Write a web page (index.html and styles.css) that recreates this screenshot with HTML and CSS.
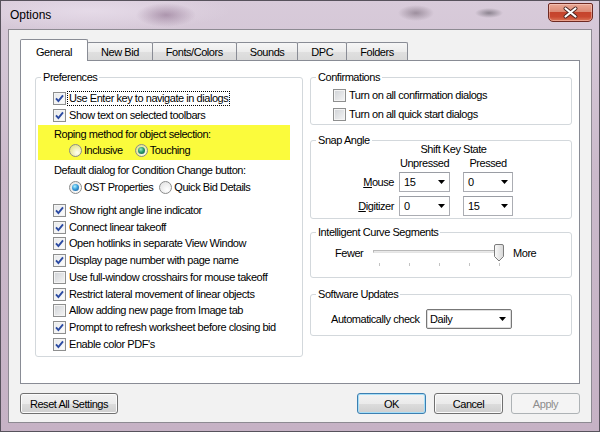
FILE: index.html
```html
<!DOCTYPE html>
<html>
<head>
    <title>Options</title>
    <meta charset="UTF-8">
    <link rel="stylesheet" href="styles.css">
</head>
<body>
<div class="window">
    <div class="titlebar">
        <span class="title">Options</span>
        <button class="close" title="Close">
            <svg width="43" height="17" viewBox="0 0 43 17">
                <path d="M16.5 4.5l10 8M26.5 4.5l-10 8" stroke="#4a2420" stroke-width="4" stroke-linecap="round"/>
                <path d="M16.5 4.5l10 8M26.5 4.5l-10 8" stroke="#fff" stroke-width="2.2" stroke-linecap="round"/>
            </svg>
        </button>
    </div>

    <div class="client">
        <div class="tabs">
            <div class="tab active">General</div>
            <div class="tab">New Bid</div>
            <div class="tab">Fonts/Colors</div>
            <div class="tab">Sounds</div>
            <div class="tab">DPC</div>
            <div class="tab">Folders</div>
        </div>

        <div class="panel">
            <fieldset class="group prefs">
                <legend>Preferences</legend>
                <div class="group-body">
                    <div class="check"><span class="box on"><svg viewBox="0 0 11 11"><path d="M2 5.4l2.4 2.7L9 2.3"/></svg></span><span class="text focus">Use Enter key to navigate in dialogs</span></div>
                    <div class="check"><span class="box on"><svg viewBox="0 0 11 11"><path d="M2 5.4l2.4 2.7L9 2.3"/></svg></span><span class="text">Show text on selected toolbars</span></div>

                    <div class="choice highlight">
                        <div class="choice-label">Roping method for object selection:</div>
                        <div class="radio-row">
                            <span class="option first"><span class="radio"></span>Inclusive</span>
                            <span class="option"><span class="radio on green"></span>Touching</span>
                        </div>
                    </div>

                    <div class="choice">
                        <div class="choice-label">Default dialog for Condition Change button:</div>
                        <div class="radio-row tall">
                            <span class="option first tight"><span class="radio on"></span>OST Properties</span>
                            <span class="option"><span class="radio"></span>Quick Bid Details</span>
                        </div>
                    </div>

                    <div class="check-list">
                        <div class="check"><span class="box on"><svg viewBox="0 0 11 11"><path d="M2 5.4l2.4 2.7L9 2.3"/></svg></span><span class="text">Show right angle line indicator</span></div>
                        <div class="check"><span class="box on"><svg viewBox="0 0 11 11"><path d="M2 5.4l2.4 2.7L9 2.3"/></svg></span><span class="text">Connect linear takeoff</span></div>
                        <div class="check"><span class="box on"><svg viewBox="0 0 11 11"><path d="M2 5.4l2.4 2.7L9 2.3"/></svg></span><span class="text">Open hotlinks in separate View Window</span></div>
                        <div class="check"><span class="box on"><svg viewBox="0 0 11 11"><path d="M2 5.4l2.4 2.7L9 2.3"/></svg></span><span class="text">Display page number with page name</span></div>
                        <div class="check"><span class="box"></span><span class="text">Use full-window crosshairs for mouse takeoff</span></div>
                        <div class="check"><span class="box on"><svg viewBox="0 0 11 11"><path d="M2 5.4l2.4 2.7L9 2.3"/></svg></span><span class="text">Restrict lateral movement of linear objects</span></div>
                        <div class="check"><span class="box"></span><span class="text">Allow adding new page from Image tab</span></div>
                        <div class="check"><span class="box on"><svg viewBox="0 0 11 11"><path d="M2 5.4l2.4 2.7L9 2.3"/></svg></span><span class="text">Prompt to refresh worksheet before closing bid</span></div>
                        <div class="check"><span class="box on"><svg viewBox="0 0 11 11"><path d="M2 5.4l2.4 2.7L9 2.3"/></svg></span><span class="text">Enable color PDF's</span></div>
                    </div>
                </div>
            </fieldset>

            <div class="stack">
                <fieldset class="group confirm">
                    <legend>Confirmations</legend>
                    <div class="group-body">
                        <div class="check wide"><span class="box"></span><span class="text">Turn on all confirmation dialogs</span></div>
                        <div class="check wide"><span class="box"></span><span class="text">Turn on all quick start dialogs</span></div>
                    </div>
                </fieldset>

                <fieldset class="group snap">
                    <legend>Snap Angle</legend>
                    <div class="snap-grid">
                        <div class="snap-head">Shift Key State</div>
                        <div class="snap-col unpressed">Unpressed</div>
                        <div class="snap-col pressed">Pressed</div>
                        <div class="snap-label row-mouse"><u>M</u>ouse</div>
                        <div class="combo row-mouse col-a">15<svg width="7" height="4" viewBox="0 0 7 4"><path d="M0 0h7L3.5 4z"/></svg></div>
                        <div class="combo row-mouse col-b">0<svg width="7" height="4" viewBox="0 0 7 4"><path d="M0 0h7L3.5 4z"/></svg></div>
                        <div class="snap-label row-digi"><u>D</u>igitizer</div>
                        <div class="combo row-digi col-a">0<svg width="7" height="4" viewBox="0 0 7 4"><path d="M0 0h7L3.5 4z"/></svg></div>
                        <div class="combo row-digi col-b">15<svg width="7" height="4" viewBox="0 0 7 4"><path d="M0 0h7L3.5 4z"/></svg></div>
                    </div>
                </fieldset>

                <fieldset class="group curve">
                    <legend>Intelligent Curve Segments</legend>
                    <div class="slider-row">
                        <span class="fewer">Fewer</span>
                        <div class="slider">
                            <div class="track"></div>
                            <div class="ticks"><i></i><i></i><i></i><i></i><i></i></div>
                            <svg class="thumb" width="11" height="18" viewBox="0 0 11 18">
                                <defs>
                                    <linearGradient id="thumbFill" x1="0" x2="1">
                                        <stop offset="0" stop-color="#fbfbfb"/>
                                        <stop offset="1" stop-color="#d6d6d6"/>
                                    </linearGradient>
                                </defs>
                                <path d="M0.5 2a1.5 1.5 0 0 1 1.5-1.5h6a1.5 1.5 0 0 1 1.5 1.5v10.5l-4.5 4.5l-4.5-4.5z" fill="url(#thumbFill)" stroke="#7c7c7c"/>
                            </svg>
                        </div>
                        <span class="more">More</span>
                    </div>
                </fieldset>

                <fieldset class="group updates">
                    <legend>Software Updates</legend>
                    <div class="update-row">
                        <span class="update-label">Automatically check</span>
                        <div class="combo list">Daily<svg width="7" height="4" viewBox="0 0 7 4"><path d="M0 0h7L3.5 4z"/></svg></div>
                    </div>
                </fieldset>
            </div>
        </div>

        <div class="actions">
            <button class="btn reset">Reset All Settings</button>
            <button class="btn default">OK</button>
            <button class="btn">Cancel</button>
            <button class="btn" disabled>Apply</button>
        </div>
    </div>
</div>
</body>
</html>
```

FILE: styles.css
```css
body {
    margin: 0;
    font-family: "Liberation Sans", Arial, sans-serif;
    font-size: 11px;
    letter-spacing: -0.45px;
    color: #000;
}

/* window frame */
.window {
    width: 600px;
    height: 432px;
    box-sizing: border-box;
    border: 1px solid #57525c;
    background:
        radial-gradient(ellipse 30px 12px at 165px 14px, rgba(140, 110, 140, 0.6), transparent),
        radial-gradient(ellipse 18px 8px at 415px 12px, rgba(110, 95, 110, 0.55), transparent),
        radial-gradient(ellipse 14px 5px at 488px 12px, rgba(90, 85, 95, 0.6), transparent),
        radial-gradient(ellipse 140px 20px at 90px 10px, rgba(235, 225, 238, 0.7), transparent),
        linear-gradient(#d8cbda, #cbbacb 40%, #c6b2c5);
    display: flex;
    flex-direction: column;
}
.titlebar {
    height: 28px;
    display: flex;
    align-items: flex-start;
    justify-content: space-between;
    padding-left: 9px;
}
.title {
    font-size: 12px;
    letter-spacing: 0;
    line-height: 28px;
}
.close {
    width: 45px;
    height: 19px;
    margin: 2px 6px 0 0;
    padding: 0;
    border: 1px solid #6e2a22;
    border-radius: 2px 2px 5px 5px;
    background: linear-gradient(#eaa896 0%, #dc8a74 45%, #c5442c 50%, #c9482f 75%, #dc7658 100%);
    box-shadow: inset 0 0 0 1px rgba(255, 220, 210, 0.45);
}
.close svg {
    display: block;
}

.client {
    height: 394px;
    box-sizing: border-box;
    margin: 0 7px 8px;
    border: 1px solid #8d8a92;
    background: #f2f2f2;
    padding: 9px 11px 0;
}

/* tabs */
.tabs {
    display: flex;
    align-items: flex-end;
    height: 21px;
}
.tab {
    position: relative;
    height: 18px;
    box-sizing: border-box;
    padding: 1px 13px 0;
    line-height: 16px;
    margin-right: -1px;
    border: 1px solid #898c95;
    border-bottom: none;
    border-radius: 2px 2px 0 0;
    background: linear-gradient(#f6f6f6, #ececec 50%, #e0e0e0 51%, #d9d9d9);
}
.tab.active {
    height: 22px;
    padding: 4px 15px 0;
    margin-bottom: -1px;
    background: #fff;
    z-index: 1;
}

.panel {
    height: 324px;
    box-sizing: border-box;
    border: 1px solid #898c95;
    background: #fff;
    display: grid;
    grid-template-columns: 268px 262px;
    column-gap: 7px;
    align-items: start;
    padding: 10px 0 0 14px;
}

/* group boxes */
.group {
    margin: 0;
    padding: 0;
    min-width: 0;
    box-sizing: border-box;
    border: 1px solid #d3d8dc;
    border-radius: 3px;
}
.group legend {
    margin-left: 5px;
    padding: 0 2px;
    line-height: 13px;
}
.prefs {
    height: 286px;
}
.prefs .group-body {
    padding: 6px 0 0 17px;
}
.stack {
    display: flex;
    flex-direction: column;
}
.confirm {
    height: 54px;
}
.confirm .group-body {
    padding: 2px 0 0 22px;
}
.snap {
    height: 85px;
    margin-top: 9px;
}
.curve {
    height: 52px;
    margin-top: 7px;
}
.updates {
    height: 48px;
    margin-top: 10px;
}

/* checkboxes */
.check {
    display: flex;
    align-items: center;
    height: 17px;
}
.check.wide {
    height: 19px;
}
.check-list {
    margin-top: 6px;
}
.check-list .check {
    height: 16.75px;
}
.box {
    flex: none;
    width: 13px;
    height: 13px;
    box-sizing: border-box;
    border: 1px solid #8e8f8f;
    background: linear-gradient(135deg, #cfd2d6, #f5f5f5);
    box-shadow: inset 0 0 0 1px #f4f4f4;
}
.box.on {
    background: linear-gradient(135deg, #e6e8ea, #fdfdfd);
}
.box svg {
    display: block;
    width: 11px;
    height: 11px;
}
.box path {
    fill: none;
    stroke: #2b4aa2;
    stroke-width: 1.9;
}
.text {
    margin-left: 2px;
    padding: 0 1px;
    line-height: 13px;
}
.text.focus {
    outline: 1px dotted #000;
}

/* radio groups */
.choice {
    margin: 2px 0 0 -15px;
    padding-left: 16px;
}
.choice.highlight {
    margin: 1px 12px 0 -15px;
    padding: 1px 0 2px 16px;
    background: #fbfb3c;
}
.choice-label {
    line-height: 16px;
}
.radio-row {
    display: flex;
    align-items: center;
    height: 16px;
    padding-left: 15px;
}
.radio-row.tall {
    height: 18px;
}
.option {
    display: inline-flex;
    align-items: center;
    gap: 2px;
}
.option.first {
    margin-right: 12px;
}
.option.tight {
    margin-right: 6px;
}
.radio {
    width: 13px;
    height: 13px;
    box-sizing: border-box;
    border-radius: 50%;
    border: 1px solid #8a8b8b;
    background: radial-gradient(circle at 65% 70%, rgba(255, 255, 255, 0.95), rgba(175, 175, 175, 0.4));
    display: flex;
    align-items: center;
    justify-content: center;
}
.radio.on::after {
    content: "";
    width: 7px;
    height: 7px;
    border-radius: 50%;
    background: radial-gradient(circle at 40% 35%, #b0f2ff 0, #3a9fdc 45%, #1a4f8a 100%);
}
.radio.green::after {
    background: radial-gradient(circle at 40% 35%, #9df0c8 0, #2b9a6c 45%, #145a3c 100%);
}

/* snap angle */
.snap-grid {
    display: grid;
    grid-template-columns: 83px 56px 63px;
    grid-template-rows: 14px 14px 22px 24px;
    margin-top: -5px;
    line-height: 14px;
}
.snap-head {
    grid-column: 2 / 4;
    grid-row: 1;
    text-align: center;
}
.snap-col {
    grid-row: 2;
    justify-self: end;
    text-align: center;
}
.unpressed {
    grid-column: 2;
    width: 51px;
}
.pressed {
    grid-column: 3;
    width: 50px;
}
.snap-label {
    grid-column: 1;
    align-self: end;
    text-align: right;
    line-height: 20px;
}
.row-mouse {
    grid-row: 3;
}
.row-digi {
    grid-row: 4;
}
.col-a {
    grid-column: 2;
    width: 51px;
}
.col-b {
    grid-column: 3;
    width: 50px;
}
.combo {
    align-self: end;
    justify-self: end;
    height: 20px;
    box-sizing: border-box;
    display: flex;
    align-items: center;
    justify-content: space-between;
    padding: 0 4px 0 4px;
    border: 1px solid #abadb3;
    border-top-color: #9a9da4;
    background: #fff;
}
.combo svg {
    fill: #000;
}
.combo.list {
    width: 86px;
    padding: 0 5px 0 3px;
    border: 1px solid #777;
    border-radius: 2px;
    box-shadow: inset 0 0 0 1px #dedede;
}

/* slider */
.slider-row {
    display: flex;
    align-items: flex-start;
    padding: 4px 0 0 24px;
    line-height: 20px;
}
.fewer {
    width: 34px;
}
.slider {
    position: relative;
    width: 136px;
    height: 24px;
}
.track {
    position: absolute;
    left: 4px;
    top: 7px;
    width: 124px;
    height: 3px;
    box-sizing: border-box;
    border: 1px solid #b9b9b9;
    border-bottom-color: #e4e4e4;
    background: #e9e9e9;
}
.ticks {
    position: absolute;
    left: 10px;
    top: 20px;
    width: 121px;
    display: flex;
    justify-content: space-between;
}
.ticks i {
    width: 1px;
    height: 3px;
    background: #c3c3c3;
}
.thumb {
    position: absolute;
    left: 125px;
    top: 1px;
}
.more {
    margin-left: 8px;
}

/* software updates */
.update-row {
    display: flex;
    align-items: center;
    padding: 8px 0 0 20px;
}
.update-label {
    width: 95px;
}

/* dialog buttons */
.actions {
    display: flex;
    gap: 8px;
    margin-top: 9px;
}
.btn {
    width: 69px;
    height: 21px;
    padding: 0;
    font: inherit;
    letter-spacing: inherit;
    color: #000;
    border: 1px solid #707070;
    border-radius: 3px;
    background: linear-gradient(#f2f2f2, #ebebeb 50%, #dddddd 51%, #cfcfcf);
    box-shadow: inset 0 0 0 1px #fbfbfb;
}
.btn.reset {
    width: 98px;
    margin-right: auto;
}
.btn.default {
    border-color: #3c7fb1;
    box-shadow: inset 0 0 0 1px #a6def7;
}
.btn:disabled {
    color: #8d8d8d;
    border-color: #adb2b5;
    background: #f4f4f4;
    box-shadow: none;
}
```
